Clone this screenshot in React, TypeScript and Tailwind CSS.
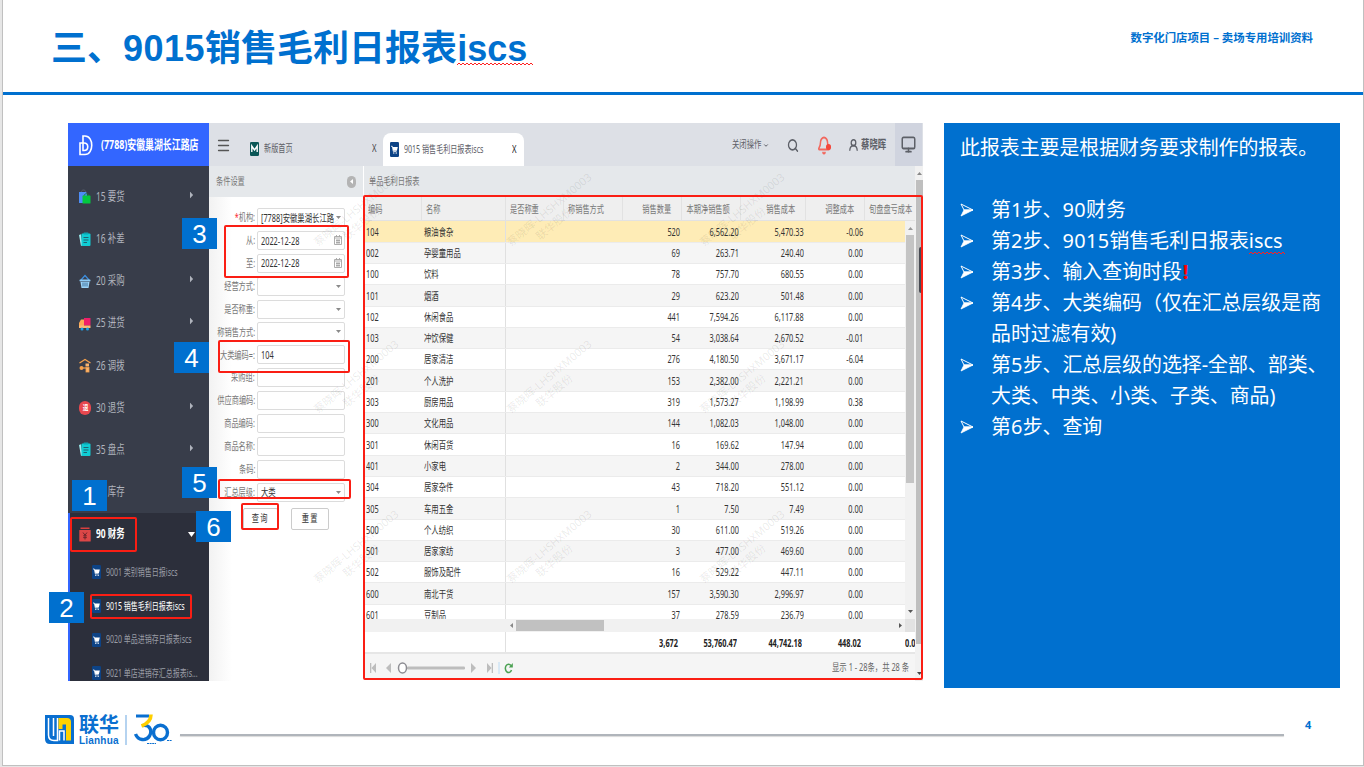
import type { ReactNode } from 'react'
import clsx from 'clsx'
import { Bell, ChevronDown, Menu, Monitor, RotateCw, Search, UserRound } from 'lucide-react'

interface NarrowProps {
  children: ReactNode
  className?: string
}

// Texto condensado na horizontal, usado em toda a janela do sistema
function Narrow({ children, className = 'origin-left' }: NarrowProps) {
  return <span className={clsx('inline-block whitespace-nowrap scale-x-[0.7]', className)}>{children}</span>
}

function Squiggle({ className }: { className: string }) {
  return (
    <svg className={clsx('absolute left-0', className)} aria-hidden="true">
      <defs>
        <pattern id="squiggle" width="4" height="4" patternUnits="userSpaceOnUse">
          <path d="M0 3L2 1L4 3" fill="none" stroke="#ff2020" strokeWidth="1" />
        </pattern>
      </defs>
      <rect width="100%" height="4" fill="url(#squiggle)" />
    </svg>
  )
}

/* ---------- Ícones do menu ---------- */

const iconClass = 'w-[12px] h-[15px] shrink-0'

function BagIcon() {
  return (
    <svg viewBox="0 0 12 15" className={iconClass}>
      <path d="M2 4C2 0 7 0 7 4" fill="none" stroke="#59606f" strokeWidth="1" />
      <path d="M0 3h7l1 2v9H0z" fill="#4d8df6" />
      <path d="M5 7C5 4 10 4 10 7" fill="none" stroke="#1d7a35" strokeWidth="0.9" />
      <rect x="3.5" y="6.5" width="8" height="8" rx="0.6" fill="#04c83f" />
    </svg>
  )
}

function ClipboardIcon() {
  return (
    <svg viewBox="0 0 12 15" className={iconClass}>
      <path d="M0 3l2-.8 1.500 11L2 14z" fill="#9deef0" />
      <rect x="2.500" y="1.500" width="9" height="12.500" rx="1" fill="#10cdd4" />
      <rect x="4.500" y="0.500" width="5" height="2" rx="0.8" fill="#0ba5b0" />
      <path d="M4.500 5.500h5M4.500 8h5M4.500 10.500h3.500" stroke="#21616f" strokeWidth="1" />
    </svg>
  )
}

function BasketIcon() {
  return (
    <svg viewBox="0 0 12 15" className={iconClass}>
      <path d="M2 6L6 1.500L10 6" fill="none" stroke="#3d8fe0" strokeWidth="1.200" />
      <rect x="0.500" y="5.500" width="11" height="2" rx="0.7" fill="#8ecbf5" />
      <path d="M1.500 8h9l-1 6h-7z" fill="#9bd3f8" />
      <path d="M4 8.500v4M6 8.500v4M8 8.500v4" stroke="#37658f" strokeWidth="0.9" />
    </svg>
  )
}

function TruckIcon() {
  return (
    <svg viewBox="0 0 12 15" className={iconClass}>
      <rect x="5" y="2" width="6.500" height="7.500" fill="#ee1f6a" />
      <path d="M0 7l2-3.500h3V12H0z" fill="#fba956" />
      <rect x="0" y="9.500" width="11.500" height="2.500" fill="#fdb974" />
      <circle cx="3" cy="13" r="1.500" fill="#1aa3e8" />
      <circle cx="8.500" cy="13" r="1.500" fill="#1aa3e8" />
    </svg>
  )
}

function DepotIcon() {
  return (
    <svg viewBox="0 0 12 15" className={iconClass}>
      <path d="M0.500 5L6 1.500L11.500 5" fill="none" stroke="#f5a04c" strokeWidth="1.400" />
      <rect x="6.500" y="5.500" width="3.500" height="3" fill="#f7b36f" />
      <rect x="7" y="9.500" width="3" height="4.500" fill="#f7b36f" stroke="#f5a04c" strokeWidth="0.800" />
      <circle cx="2.500" cy="10" r="2" fill="#f5a04c" />
      <path d="M4 10h3" stroke="#f5a04c" strokeWidth="1.200" />
    </svg>
  )
}

function ReturnIcon() {
  return (
    <span className="flex h-[14px] w-[12px] shrink-0 items-center justify-center rounded-full bg-[#e8484f] text-[7px] leading-none font-bold text-white">
      <span className="scale-x-[0.8]">退</span>
    </span>
  )
}

function MoneyIcon() {
  return (
    <svg viewBox="0 0 12 15" className={iconClass}>
      <rect x="1.500" y="0.500" width="9" height="1.500" fill="#d8403f" />
      <rect x="0.300" y="3" width="11.400" height="11.500" rx="0.6" fill="#dc4747" />
      <path d="M4 5.500L6 8.200L8 5.500M6 8.200V12.500M4.200 8.800h3.600M4.200 10.600h3.600" fill="none" stroke="#70262c" strokeWidth="1" />
    </svg>
  )
}

function CartIcon({ className = 'w-[9px] h-[13px]' }: { className?: string }) {
  return (
    <svg viewBox="0 0 9 14" preserveAspectRatio="none" className={clsx('shrink-0', className)}>
      <rect width="9" height="14" rx="1.200" fill="#0d4386" />
      <path d="M1 4h1.300l1 4.800h3.200" fill="none" stroke="#fff" strokeWidth="0.8" />
      <path d="M2.600 4.600h5.200l-.9 3.600H3.300z" fill="#fff" />
      <circle cx="3.800" cy="10.300" r="0.7" fill="#fff" />
      <circle cx="6.200" cy="10.300" r="0.7" fill="#fff" />
    </svg>
  )
}

function Caret({ className }: { className: string }) {
  return (
    <svg viewBox="0 0 6 4" preserveAspectRatio="none" className={clsx('shrink-0', className)}>
      <path d="M0 0h6L3 4z" fill="currentColor" />
    </svg>
  )
}

/* ---------- Dados ---------- */

const menuItems = [
  { label: '15 要货', icon: <BagIcon />, arrow: true },
  { label: '16 补差', icon: <ClipboardIcon />, arrow: false },
  { label: '20 采购', icon: <BasketIcon />, arrow: true },
  { label: '25 进货', icon: <TruckIcon />, arrow: true },
  { label: '26 调拨', icon: <DepotIcon />, arrow: false },
  { label: '30 退货', icon: <ReturnIcon />, arrow: true },
  { label: '35 盘点', icon: <ClipboardIcon />, arrow: true },
  { label: '40 库存', icon: <ClipboardIcon />, arrow: false },
]

const subItems = ['9001 类别销售日报iscs', '9015 销售毛利日报表iscs', '9020 单品进销存日报表iscs', '9021 单店进销存汇总报表is...']

const fields: { label: string; value?: string; kind?: 'select' | 'date'; required?: boolean }[] = [
  { label: '机构:', value: '[7788]安徽巢湖长江路', kind: 'select', required: true },
  { label: '从:', value: '2022-12-28', kind: 'date' },
  { label: '至:', value: '2022-12-28', kind: 'date' },
  { label: '经营方式:', kind: 'select' },
  { label: '是否称重:', kind: 'select' },
  { label: '称销售方式:', kind: 'select' },
  { label: '大类编码=:', value: '104' },
  { label: '采购组:' },
  { label: '供应商编码:' },
  { label: '商品编码:' },
  { label: '商品名称:' },
  { label: '条码:' },
  { label: '汇总层级:', value: '大类', kind: 'select' },
]

const rows = [
  ['104', '粮油食杂', '520', '6,562.20', '5,470.33', '-0.06'],
  ['002', '孕婴童用品', '69', '263.71', '240.40', '0.00'],
  ['100', '饮料', '78', '757.70', '680.55', '0.00'],
  ['101', '烟酒', '29', '623.20', '501.48', '0.00'],
  ['102', '休闲食品', '441', '7,594.26', '6,117.88', '0.00'],
  ['103', '冲饮保健', '54', '3,038.64', '2,670.52', '-0.01'],
  ['200', '居家清洁', '276', '4,180.50', '3,671.17', '-6.04'],
  ['201', '个人洗护', '153', '2,382.00', '2,221.21', '0.00'],
  ['303', '厨房用品', '319', '1,573.27', '1,198.99', '0.38'],
  ['300', '文化用品', '144', '1,082.03', '1,048.00', '0.00'],
  ['301', '休闲百货', '16', '169.62', '147.94', '0.00'],
  ['401', '小家电', '2', '344.00', '278.00', '0.00'],
  ['304', '居家杂件', '43', '718.20', '551.12', '0.00'],
  ['305', '车用五金', '1', '7.50', '7.49', '0.00'],
  ['500', '个人纺织', '30', '611.00', '519.26', '0.00'],
  ['501', '居家家纺', '3', '477.00', '469.60', '0.00'],
  ['502', '服饰及配件', '16', '529.22', '447.11', '0.00'],
  ['600', '南北干货', '157', '3,590.30', '2,996.97', '0.00'],
  ['601', '豆制品', '37', '278.59', '236.79', '0.00'],
]

const gridCols = 'grid grid-cols-[58px_84px_58px_59px_59px_59px_65px_59px_50px]'

const watermarks = [
  'left-[252px] top-[112px]',
  'left-[445px] top-[112px]',
  'left-[638px] top-[112px]',
  'left-[252px] top-[279px]',
  'left-[445px] top-[279px]',
  'left-[638px] top-[279px]',
  'left-[252px] top-[449px]',
  'left-[445px] top-[449px]',
  'left-[638px] top-[449px]',
]

const frames = [
  'left-[2px] top-[394px] w-[67px] h-[35px]',
  'left-[22px] top-[471px] w-[102px] h-[25px]',
  'left-[156px] top-[102px] w-[125px] h-[53px]',
  'left-[150px] top-[217px] w-[132px] h-[33px]',
  'left-[150px] top-[356px] w-[133px] h-[20px]',
  'left-[173px] top-[380px] w-[38px] h-[27px]',
  'left-[295px] top-[72px] w-[560px] h-[485px]',
]

const badges = [
  { n: 1, pos: 'left-[4px] top-[357px]' },
  { n: 2, pos: 'left-[-19px] top-[469px]' },
  { n: 3, pos: 'left-[114px] top-[95px]' },
  { n: 4, pos: 'left-[106px] top-[219px]' },
  { n: 5, pos: 'left-[114px] top-[344px]' },
  { n: 6, pos: 'left-[128px] top-[388px]' },
]

/* ---------- Janela do sistema ---------- */

function Sidebar() {
  return (
    <aside className="flex w-[141px] shrink-0 flex-col bg-[#383d4a]">
      <div className="flex h-[43px] shrink-0 items-center bg-[#3366ff] pt-px pl-[11px] text-white">
        <svg viewBox="0 0 14 21" className="h-[21px] w-[14px] shrink-0" fill="none" stroke="#fff" strokeWidth="1.600">
          <path d="M4 4V1h2C15 1 15 19.500 6 19.500H1V8h4c5 0 5 7.500 0 7.500H4V4" />
        </svg>
        <Narrow className="ml-[8px] origin-left text-[12.700px] font-bold">(7788)安徽巢湖长江路店</Narrow>
      </div>
      <nav className="pt-[9px]">
        {menuItems.map((item) => (
          <div key={item.label} className="flex h-[42.200px] items-center pt-[1.500px] pl-[11px] text-[12px] text-[#b0b4bd]">
            {item.icon}
            <span className="ml-[5px] w-[92px]">
              <Narrow>{item.label}</Narrow>
            </span>
            {item.arrow && <Caret className="h-[4px] w-[7px] -rotate-90 scale-y-[0.8] -translate-y-[2px]" />}
          </div>
        ))}
      </nav>
      <div className="flex-1 overflow-hidden border-l-[2.500px] border-[#3366ff] bg-[#2c2f3b]">
        <div className="flex h-[43px] items-center pl-[9px] text-[12px] font-bold text-white">
          <MoneyIcon />
          <span className="ml-[5px] w-[92px]">
            <Narrow>90 财务</Narrow>
          </span>
          <Caret className="h-[5px] w-[7px]" />
        </div>
        {subItems.map((label, i) => (
          <div key={label} className={clsx('flex h-[33.700px] items-center pl-[22px] text-[10px]', i === 1 ? 'text-white' : 'text-[#9a9da6]')}>
            <CartIcon className="h-[14px] w-[9px]" />
            <Narrow className="ml-[5px] origin-left">{label}</Narrow>
          </div>
        ))}
      </div>
    </aside>
  )
}

function TopBar() {
  return (
    <div className="flex h-[43px] shrink-0 items-center bg-[#dde0e6] text-[10px] text-[#5d6068]">
      <Menu className="mt-[2px] ml-[7px] h-[17px] w-[15px] shrink-0 text-[#555]" preserveAspectRatio="none" />
      <div className="ml-[12px] flex h-full w-[140px] items-center pt-[8px]">
        <svg viewBox="0 0 9 14" className="ml-[7px] h-[14px] w-[9px] shrink-0">
          <rect width="9" height="14" rx="1.200" fill="#0b5757" />
          <path d="M1.800 10V4L4.500 8L7.200 4V10" fill="none" stroke="#fff" strokeWidth="1.400" />
        </svg>
        <span className="ml-[5px] w-[108px] text-[10.200px]">
          <Narrow>新版首页</Narrow>
        </span>
        <Narrow className="origin-left text-[11px] text-[#444]">X</Narrow>
      </div>
      <div className="flex h-[33px] w-[141px] items-center self-end rounded-t-[8px] bg-white">
        <CartIcon className="ml-[7px] h-[15px] w-[9px]" />
        <span className="ml-[5px] w-[108px] text-[10.100px]">
          <Narrow>9015 销售毛利日报表iscs</Narrow>
        </span>
        <Narrow className="origin-left text-[11px] text-[#222]">X</Narrow>
      </div>
      <div className="ml-[208px] flex h-full w-[190px] shrink-0 items-center pt-px">
        <span className="w-[31px] text-[10.500px]">
          <Narrow>关闭操作</Narrow>
        </span>
        <ChevronDown className="h-[7px] w-[6px] shrink-0" strokeWidth={4} />
        <Search className="ml-[18px] h-[15px] w-[12px] shrink-0" strokeWidth={2.6} preserveAspectRatio="none" />
        <span className="relative ml-[18px]">
          <Bell className="h-[19px] w-[14px] text-[#f2685e]" strokeWidth={2.6} preserveAspectRatio="none" />
          <span className="absolute right-0 bottom-[5px] h-[6px] w-[5px] rounded-full bg-[#f4473b]" />
        </span>
        <UserRound className="ml-[17px] h-[14px] w-[11px] shrink-0" strokeWidth={2.8} preserveAspectRatio="none" />
        <span className="ml-[2px] w-[34px] text-[12px] font-bold">
          <Narrow>蔡晓晖</Narrow>
        </span>
        <span className="-mt-px flex h-[43px] w-[28px] items-center justify-center bg-[#d0d4df]">
          <Monitor className="h-[19px] w-[15px]" strokeWidth={2.4} preserveAspectRatio="none" />
        </span>
      </div>
    </div>
  )
}

function FilterPanel() {
  return (
    <div className="flex w-[154px] shrink-0 flex-col bg-gradient-to-r from-[#f2f2f2] via-white via-15% to-white text-[10.300px] text-[#777]">
      <div className="flex h-[31px] shrink-0 items-center bg-[#e5e8eb] pl-[7px]">
        <span className="w-[131px]">
          <Narrow>条件设置</Narrow>
        </span>
        <span className="flex h-[12px] w-[9px] items-center justify-center rounded-full bg-[#b4b4b4] text-white">
          <Caret className="h-[3px] w-[5px] rotate-90" />
        </span>
      </div>
      <div className="pt-[9px]">
        {fields.map((f) => (
          <div key={f.label} className="flex h-[22.900px] items-center">
            <span className="mr-[2px] flex w-[46px] shrink-0 justify-end pt-px">
              <Narrow className="origin-right">
                {f.required && <span className="text-red-500">*</span>}
                {f.label}
              </Narrow>
            </span>
            <span className="flex h-[19px] w-[88px] items-center rounded-[2px] border border-[#dcdcdc] bg-white pl-[3px] text-[#333]">
              <span className="w-[73px] pt-px text-[10.500px] leading-none">
                {f.value && <Narrow>{f.value}</Narrow>}
              </span>
              {f.kind === 'select' && <Caret className="ml-[2px] h-[3px] w-[5px] text-[#8a8a8a]" />}
              {f.kind === 'date' && (
                <svg viewBox="0 0 8 10" className="h-[10px] w-[8px] shrink-0" fill="none" stroke="#a5a5a5">
                  <path d="M.5 1.500h7v8h-7zM.5 3h7M2.500 0v2M5.500 0v2M2 5.500h4M2 7.500h4M3 4v5M5 4v5" strokeWidth="0.9" />
                </svg>
              )}
            </span>
          </div>
        ))}
      </div>
      <div className="mt-[4px] flex pl-[34px] text-[#333]">
        <button className="flex h-[22px] w-[35px] items-center justify-center rounded-[2px] border border-[#ccc] bg-white">
          <Narrow className="origin-center tracking-[2px]">查询</Narrow>
        </button>
        <button className="ml-[13px] flex h-[22px] w-[38px] items-center justify-center rounded-[2px] border border-[#ccc] bg-white">
          <Narrow className="origin-center tracking-[2px]">重置</Narrow>
        </button>
      </div>
    </div>
  )
}

function NumCell({ children }: { children?: ReactNode }) {
  return (
    <span className="flex justify-end pt-[2px] pr-[2px]">
      <Narrow className="origin-right">{children}</Narrow>
    </span>
  )
}

function HeadCell({ children, right }: { children: ReactNode; right?: boolean }) {
  return (
    <span className={clsx('flex h-full items-center border-r border-[#e2e2e2] pt-[2px]', right ? 'justify-end pr-[10px]' : 'pl-[4px]')}>
      <Narrow className={right ? 'origin-right' : 'origin-left'}>{children}</Narrow>
    </span>
  )
}

function Pager() {
  return (
    <div className="flex h-[28px] shrink-0 items-center border-t-2 border-[#e6e6e6] bg-[#f5f5f5] pt-px pr-[6px] pl-[5px] text-[#666]">
      <svg viewBox="0 0 150 12" className="h-[12px] w-[150px] shrink-0">
        <g fill="#bdbdbd">
          <path d="M1 1h1.300v10H1zM7 1v10L2.500 6z" />
          <path d="M22 1v10L17 6z" />
          <rect x="38" y="4.500" width="58" height="3" rx="1.200" />
          <path d="M102 1v10L107 6z" />
          <path d="M118 1v10L122.500 6zM122.700 1h1.300v10h-1.300z" />
        </g>
        <path d="M130 0v12" stroke="#bcdcf5" />
        <ellipse cx="33.500" cy="6" rx="4" ry="5" fill="#fff" stroke="#8d8d93" strokeWidth="1.500" />
        <path d="M142 3.600A3.200 4.200 0 1 0 142.500 8" fill="none" stroke="#4ba152" strokeWidth="1.500" />
        <path d="M143.800 1v4.400h-4z" fill="#4ba152" />
      </svg>
      <span className="ml-auto flex w-[80px] justify-end">
        <Narrow className="origin-right text-[10.500px]">显示 1 - 28条，共 28 条</Narrow>
      </span>
    </div>
  )
}

function ReportGrid() {
  return (
    <div className="flex w-[552px] shrink-0 flex-col pl-px">
      <div className="flex h-[31px] shrink-0 items-center bg-[#e5e8eb] pl-[5px] text-[10.300px] text-[#777]">
        <Narrow>单品毛利日报表</Narrow>
      </div>
      <div className={clsx(gridCols, 'h-[24px] shrink-0 overflow-hidden border-b border-[#e2e2e2] bg-[#efefef] text-[10.300px] text-[#777]')}>
        <HeadCell>编码</HeadCell>
        <HeadCell>名称</HeadCell>
        <HeadCell>是否称重</HeadCell>
        <HeadCell>称销售方式</HeadCell>
        <HeadCell right>销售数量</HeadCell>
        <HeadCell right>本期净销售额</HeadCell>
        <HeadCell right>销售成本</HeadCell>
        <HeadCell right>调整成本</HeadCell>
        <span className="flex h-full items-center pt-[2px] pl-[4px]">
          <Narrow>旬盘盘亏成本</Narrow>
        </span>
      </div>
      <div className="flex h-[398px] shrink-0 overflow-hidden">
        <div className="w-[541px] shrink-0 pt-[0.400px] text-[10.500px] text-[#333]">
          {rows.map(([code, name, qty, sales, cost, adjust], i) => (
            <div
              key={code}
              className={clsx(
                gridCols,
                'h-[21.300px] w-[541px] items-center overflow-hidden border-b border-[#ebebeb]',
                i === 0 ? 'bg-[#feecb6]' : i % 2 ? 'bg-[#f5f5f5]' : 'bg-white',
              )}
            >
              <span className="pt-[2px] pl-[2px]">
                <Narrow>{code}</Narrow>
              </span>
              <span className="flex h-full items-center border-r border-[#e0e0e0] pt-[2px] pl-[2px]">
                <Narrow>{name}</Narrow>
              </span>
              <span />
              <span />
              <NumCell>{qty}</NumCell>
              <NumCell>{sales}</NumCell>
              <NumCell>{cost}</NumCell>
              <NumCell>{adjust}</NumCell>
            </div>
          ))}
        </div>
        <div className="flex w-[10px] flex-col items-center bg-[#f1f1f1] py-[6px] text-[#555]">
          <Caret className="h-[3px] w-[5px] rotate-180 text-[#999]" />
          <div className="mt-[5px] h-[248px] w-[8px] bg-[#c4c4c4]" />
          <Caret className="mt-auto h-[3px] w-[5px]" />
        </div>
      </div>
      <div className="flex h-[13px] shrink-0 items-center bg-[#f1f1f1] pl-[145px]">
        <Caret className="h-[3px] w-[5px] rotate-90 text-[#888]" />
        <div className="ml-[2px] h-[11px] w-[88px] bg-[#c1c1c1]" />
        <Caret className="ml-[294px] h-[3px] w-[5px] -rotate-90 text-[#555]" />
        <div className="ml-auto h-full w-[10px] bg-[#e2e2e2]" />
      </div>
      <div className={clsx(gridCols, 'h-[20px] shrink-0 items-center overflow-hidden bg-white text-[10.500px] font-bold text-[#222]')}>
        <span />
        <span className="h-full border-r border-[#e0e0e0]" />
        <span />
        <span />
        {['3,672', '53,760.47', '44,742.18', '448.02'].map((total) => (
          <span key={total} className="flex justify-end pt-[3px] pr-[4px]">
            <Narrow className="origin-right">{total}</Narrow>
          </span>
        ))}
        <span className="pt-[3px] pl-[40px]">
          <Narrow>0.00</Narrow>
        </span>
      </div>
      <Pager />
    </div>
  )
}

function SystemWindow() {
  return (
    <div className="relative h-[558px] w-[855px] shrink-0">
      <div className="flex h-full w-full overflow-hidden bg-white">
        <Sidebar />
        <div className="flex w-[714px] shrink-0 flex-col">
          <TopBar />
          <div className="flex flex-1 overflow-hidden">
            <FilterPanel />
            <ReportGrid />
            <div className="flex flex-1 flex-col items-center bg-[#f1f1f1] py-[6px] text-[#888]">
              <Caret className="h-[3px] w-[5px] rotate-180" />
              <div className="mt-[5px] h-[464px] w-[7px] bg-[#bfbfbf]" />
              <Caret className="mt-auto h-[3px] w-[5px] text-[#444]" />
            </div>
          </div>
        </div>
      </div>

      {/* Marca d'água diagonal */}
      <div className="pointer-events-none absolute inset-y-[43px] right-0 left-0 overflow-hidden">
        <div className="absolute inset-x-0 -top-[43px]">
          {watermarks.map((pos) => (
            <div key={pos} className={clsx('absolute origin-bottom-left -rotate-40 text-[11px] leading-[14px] whitespace-nowrap text-black/[0.09]', pos)}>
              蔡晓晖-LHSHXM0003
              <div className="absolute top-[14px] left-[26px]">联华股份</div>
            </div>
          ))}
        </div>
      </div>

      <div className="absolute top-[124px] left-[851px] h-[46px] w-[4px] rounded-l-[2px] bg-[#474a52]" />
      {frames.map((pos) => (
        <div key={pos} className={clsx('absolute rounded-[2px] border-2 border-[#fa1e14]', pos)} />
      ))}
      {badges.map(({ n, pos }) => (
        <div key={n} className={clsx("absolute flex h-[31px] w-[35px] items-center justify-center bg-[#0070cf] font-['Liberation_Sans'] text-[26px] leading-none text-white", pos)}>
          {n}
        </div>
      ))}
    </div>
  )
}

/* ---------- Slide ---------- */

function Step({ children }: { children: ReactNode }) {
  return (
    <li className="flex">
      <svg viewBox="0 0 14 14" className="mt-[9px] mr-[17px] h-[14px] w-[14px] shrink-0">
        <path d="M1 1L13 7L4 7z" fill="none" stroke="#fff" strokeWidth="1" />
        <path d="M4 7H13L1 13z" fill="#fff" stroke="#fff" strokeWidth="0.8" />
      </svg>
      <span className="whitespace-nowrap">{children}</span>
    </li>
  )
}

function Digits({ children }: { children: ReactNode }) {
  return <span className="tracking-[0.400px]">{children}</span>
}

function Notes() {
  return (
    <section className="h-[565px] w-[396px] shrink-0 bg-[#0070cf] pt-[9px] pl-[16px] text-[19.900px] leading-[31px] text-white">
      <p className="mb-[31px] whitespace-nowrap">此报表主要是根据财务要求制作的报表。</p>
      <ul>
        <Step>第<Digits>1</Digits>步、<Digits>90</Digits>财务</Step>
        <Step>
          第<Digits>2</Digits>步、<Digits>9015</Digits>销售毛利日报表
          <span className="relative">
            iscs
            <Squiggle className="top-[24px] h-[4px] w-[36px]" />
          </span>
        </Step>
        <Step>第<Digits>3</Digits>步、输入查询时段<b className="ml-px text-[#ff0000]">!</b></Step>
        <Step>第<Digits>4</Digits>步、大类编码（仅在汇总层级是商<br />品时过滤有效)</Step>
        <Step>第<Digits>5</Digits>步、汇总层级的选择-全部、部类、<br />大类、中类、小类、子类、商品)</Step>
        <Step>第<Digits>6</Digits>步、查询</Step>
      </ul>
    </section>
  )
}

function Logo() {
  return (
    <div className="flex items-center text-[#0a6fd0]">
      <svg viewBox="0 0 29 29" className="h-[29px] w-[29px]">
        <path d="M0 0H25Q29 0 29 4V29H5Q0 29 0 24z" fill="#0a6fd0" />
        <path d="M3.500 3V20Q3.500 25.500 9 25.500H12.500V3M8.500 3V21" fill="none" stroke="#fff" strokeWidth="1.500" />
        <path d="M13.500 3H22Q26 3 26 7V25.500H21V9.500H17.500V14H13.500z" fill="#ffd200" />
        <path d="M14.500 25.500V16H19V25.500" fill="none" stroke="#fff" strokeWidth="1.500" />
      </svg>
      <div className="ml-[5px] w-[40px]">
        <div className="text-[20px] leading-[19px] font-bold whitespace-nowrap">联华</div>
        <div className="mt-[2px] font-['Liberation_Sans'] text-[10px] leading-[9px] font-bold tracking-[0.200px]">Lianhua</div>
      </div>
      <div className="ml-[6px] h-[30px] w-[2px] bg-[#b5d3f0]" />
      <svg viewBox="0 0 38 31" className="ml-[7px] h-[31px] w-[38px]" fill="none">
        <path d="M2 2H15" stroke="#0a6fd0" strokeWidth="3" />
        <path d="M9 11.500C17 10.500 18 18 15.500 22C12 27.500 4 26.500 1.500 20" stroke="#0a6fd0" strokeWidth="3.400" />
        <path d="M17 0.500C17 6 14 9.500 7.500 12" stroke="#ffcf00" strokeWidth="3.600" />
        <ellipse cx="26.500" cy="18.500" rx="7" ry="7.200" stroke="#0a6fd0" strokeWidth="3.400" />
        <path d="M13 29.500h9M33 26.500h5" stroke="#0a6fd0" strokeWidth="1.200" strokeDasharray="2 .6" />
      </svg>
    </div>
  )
}

export default function App() {
  return (
    <div className="h-[767px] w-[1364px] overflow-hidden bg-[#e6e6e6] pl-[2px] font-['Noto_Sans','Noto_Sans_CJK_SC',sans-serif]">
      <div className="flex h-[766px] flex-col border-r border-b border-l border-[#c0c0c0] bg-white">
        <header className="flex h-[95px] shrink-0 justify-between border-b-[3px] border-[#0070cf] pr-[50px] pl-[48px] text-[#0070cf]">
          <h1 className="pt-[22px] font-['Liberation_Sans','Noto_Sans_CJK_SC',sans-serif] text-[36px] leading-[54px] font-bold whitespace-nowrap">
            三、<span className="tracking-[0.500px]">9015</span>销售毛利日报表
            <span className="relative">
              iscs
              <Squiggle className="top-[34px] h-[4px] w-[76px]" />
            </span>
          </h1>
          <p className="pt-[30px] text-[11.400px] leading-[16px] font-bold">数字化门店项目 – 卖场专用培训资料</p>
        </header>
        <main className="flex h-[593px] shrink-0 pt-[28px] pl-[65px]">
          <SystemWindow />
          <div className="w-[21px] shrink-0" />
          <Notes />
        </main>
        <footer className="flex items-start pt-[26px] pl-[42px] text-[#0070cf]">
          <Logo />
          <div className="mt-[20px] ml-[8px] h-[2px] w-[1104px] bg-[#b0b5bb] shadow-[0_1px_1px_rgba(0,0,0,0.15)]" />
          <span className="mt-[3px] ml-[21px] text-[11px] leading-[16px] font-bold">4</span>
        </footer>
      </div>
    </div>
  )
}
